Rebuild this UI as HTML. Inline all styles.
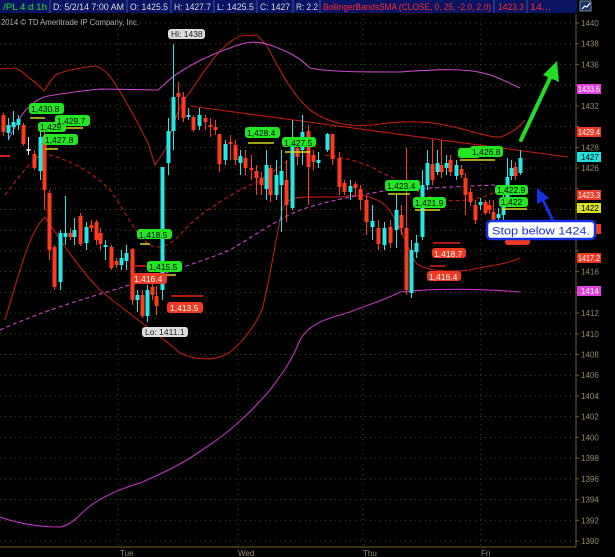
<!DOCTYPE html>
<html><head><meta charset="utf-8"><style>
html,body{margin:0;padding:0;background:#000;width:615px;height:557px;overflow:hidden}
svg{display:block}
text{font-family:"Liberation Sans",sans-serif}
</style></head><body>
<svg id="s" width="615" height="557" viewBox="0 0 615 557" xmlns="http://www.w3.org/2000/svg">
<rect width="615" height="557" fill="#000"/>
<g id="grid"></g>
<!-- header -->
<rect x="0" y="0" width="577" height="13" fill="#0a1463"/>
<g font-size="9" fill="#d8d8d8" lengthAdjust="spacingAndGlyphs">
<text x="3" y="10" fill="#26e026" textLength="44" lengthAdjust="spacingAndGlyphs">/PL 4 d 1h</text>
<text x="53" y="10" textLength="71" lengthAdjust="spacingAndGlyphs">D: 5/2/14 7:00 AM</text>
<text x="130" y="10" textLength="38" lengthAdjust="spacingAndGlyphs">O: 1425.5</text>
<text x="174" y="10" textLength="37" lengthAdjust="spacingAndGlyphs">H: 1427.7</text>
<text x="217" y="10" textLength="37" lengthAdjust="spacingAndGlyphs">L: 1425.5</text>
<text x="260" y="10" textLength="30" lengthAdjust="spacingAndGlyphs">C: 1427</text>
<text x="296" y="10" textLength="22" lengthAdjust="spacingAndGlyphs">R: 2.2</text>
<text x="323" y="10" fill="#ff2a2a" textLength="168" lengthAdjust="spacingAndGlyphs">BollingerBandsSMA (CLOSE, 0, 25, -2.0, 2.0)</text>
<text x="498" y="10" fill="#ff2a2a" textLength="26" lengthAdjust="spacingAndGlyphs">1423.3</text>
<text x="530" y="10" fill="#ff2a2a" textLength="21" lengthAdjust="spacingAndGlyphs">14...</text>
</g>
<g stroke="#3b55b0" stroke-width="1">
<line x1="50" y1="0" x2="50" y2="13"/><line x1="127" y1="0" x2="127" y2="13"/><line x1="171" y1="0" x2="171" y2="13"/>
<line x1="214" y1="0" x2="214" y2="13"/><line x1="257" y1="0" x2="257" y2="13"/><line x1="293" y1="0" x2="293" y2="13"/>
<line x1="320" y1="0" x2="320" y2="13"/><line x1="494" y1="0" x2="494" y2="13"/><line x1="527" y1="0" x2="527" y2="13"/>
</g>
<rect x="580" y="1" width="11" height="10" fill="#1a2f6a" stroke="#8aa" stroke-width="0.8"/>
<path d="M582 9 L585 6 L587 7 L590 3" stroke="#fff" fill="none" stroke-width="1.2"/>
<text x="1" y="25" font-size="8.5" fill="#b0b0b0" textLength="138" lengthAdjust="spacingAndGlyphs">2014 © TD Ameritrade IP Company, Inc.</text>

<!-- bands -->
<g fill="none" stroke-width="1.1">
<path stroke="#c01a10" d="M0 69 L15 68 C22 70,26 76,32 80 C38 84,40 87,44 91 C48 85,52 78,56 75 C65 70,80 68,95 66 C100 67,104 70,108 74 C115 82,125 100,135 118 L148 143 L155 165 L165 150 C172 130,178 105,190 92 C205 70,220 45,240 36 L257 35 L267 46 C280 70,290 92,310 110 C330 124,350 128,380 124 C410 120,430 122,445 125 C470 130,490 138,500 137 C512 134,520 126,525 120"/>
<path stroke="#c01a10" d="M5 320 C20 270,30 230,45 217 C60 240,80 270,100 290 C130 315,160 335,180 353 C195 360,215 362,230 352 C245 340,255 325,262 310 C270 280,278 225,283 207 C290 195,300 197,340 197 C360 194,372 195,385 205 C395 215,405 240,415 262 C425 272,450 272,470 270 C490 265,505 265,520 258"/>
<path stroke="#c01a10" stroke-dasharray="4,3" d="M5 195 C20 175,30 162,43 153 C70 160,90 170,110 190 C125 210,135 235,150 245 C160 250,170 245,180 235 C200 210,240 190,260 180 C285 165,300 150,313 140 M325 155 C345 158,365 162,380 172 C400 180,420 195,440 200 C460 202,480 200,495 192"/>
<path stroke="#cc44cc" d="M8 140 C15 128,20 115,28 108 C35 101,40 98,48 96 C60 94,80 91,100 89 L158 90 C165 84,170 78,180 72 C195 62,210 55,230 48 C245 42,255 40,270 45 C290 52,300 58,310 68 C330 72,360 72,400 72 C440 69,470 68,490 75 C505 80,515 86,520 88"/>
<path stroke="#cc44cc" stroke-dasharray="4,3" d="M0 330 C40 312,80 300,120 288 C160 275,200 262,230 250 C260 232,280 218,300 210 C330 200,360 195,390 190 C430 188,470 186,495 185"/>
<path stroke="#c033c0" d="M0 517 C20 524,40 527,60 527 C70 525,75 520,85 510 C100 497,120 489,140 483 C160 474,180 466,205 448 C230 432,250 413,270 390 C285 370,292 360,300 340 C310 322,330 318,350 312 C370 304,385 300,400 292 C430 289,470 288,520 292"/>
<line x1="190" y1="106" x2="568" y2="157" stroke="#c01a10"/>
<line x1="0" y1="156" x2="10" y2="156" stroke="#d0201a" stroke-width="2"/>
</g>
<g id="candles"></g>

<!-- yellow/red level lines -->
<g stroke="#d8d820" stroke-width="1.5">
<line x1="30" y1="118" x2="45" y2="118"/><line x1="65" y1="128" x2="83" y2="128"/><line x1="45" y1="149" x2="58" y2="149"/>
<line x1="140" y1="244" x2="150" y2="244"/><line x1="165" y1="275" x2="176" y2="275"/>
<line x1="248" y1="143" x2="274" y2="143"/><line x1="285" y1="152" x2="310" y2="152"/>
<line x1="388" y1="194" x2="410" y2="194"/><line x1="415" y1="210" x2="440" y2="210"/>
<line x1="460" y1="160" x2="495" y2="160"/><line x1="502" y1="209" x2="527" y2="209"/>
</g>
<g stroke="#e02010" stroke-width="1.5">
<line x1="135" y1="266" x2="150" y2="266"/><line x1="171" y1="296" x2="203" y2="296"/>
<line x1="433" y1="243" x2="460" y2="243"/><line x1="430" y1="266" x2="445" y2="266"/>
</g>

<!-- labels -->
<g font-size="8.5">
<g fill="#22e622"><rect x="29" y="103" width="35" height="11" rx="3"/><rect x="55" y="115" width="35" height="11" rx="3"/><rect x="38" y="122" width="28" height="10" rx="3"/><rect x="43" y="134" width="35" height="11" rx="3"/>
<rect x="137" y="229" width="35" height="10" rx="3"/><rect x="147" y="261" width="35" height="11" rx="3"/>
<rect x="245" y="127" width="35" height="11" rx="3"/><rect x="282" y="137" width="34" height="10" rx="3"/>
<rect x="385" y="180" width="35" height="11" rx="3"/><rect x="413" y="197" width="33" height="11" rx="3"/>
<rect x="458" y="148" width="22" height="10" rx="3"/><rect x="470" y="146" width="33" height="11" rx="3"/>
<rect x="495" y="185" width="33" height="10" rx="3"/><rect x="499" y="197" width="29" height="10" rx="3"/></g>
<g fill="#000">
<text x="31" y="112">1,430.8</text><text x="57" y="124">1,429.7</text><text x="40" y="130">1,429</text><text x="45" y="143">1,427.8</text>
<text x="139" y="238">1,418.5</text><text x="149" y="270">1,415.5</text>
<text x="247" y="136">1,428.4</text><text x="284" y="146">1,427.5</text>
<text x="387" y="189">1,423.4</text><text x="415" y="206">1,421.9</text>
<text x="472" y="155">1,426.8</text><text x="497" y="193">1,422.9</text><text x="501" y="205">1,422</text>
</g>
<g fill="#ee3a22"><rect x="132" y="273" width="35" height="11" rx="3"/><rect x="167" y="302" width="36" height="11" rx="3"/>
<rect x="432" y="248" width="34" height="10" rx="3"/><rect x="427" y="271" width="34" height="10" rx="3"/><rect x="505" y="236" width="25" height="9" rx="3"/></g>
<g fill="#fff"><text x="134" y="282">1,416.4</text><text x="170" y="311">1,413.5</text><text x="434" y="257">1,418.7</text><text x="429" y="280">1,416.4</text></g>
<g fill="#ddd"><rect x="168" y="29" width="37" height="10" rx="3"/><rect x="142" y="327" width="46" height="10" rx="3"/></g>
<g fill="#222"><text x="171" y="37">Hi: 1438</text><text x="145" y="335">Lo: 1411.1</text></g>
</g>

<!-- arrows -->
<line x1="521" y1="140" x2="550" y2="78" stroke="#22dd22" stroke-width="4" stroke-linecap="round"/>
<polygon points="557,61 559,82 543,75" fill="#22dd22"/>
<line x1="553" y1="221" x2="543" y2="200" stroke="#1530e0" stroke-width="3"/>
<polygon points="537,188 549,198 537,204" fill="#1530e0"/>

<!-- axis -->
<line x1="576" y1="14" x2="576" y2="547" stroke="#7a5a20"/>
<line x1="0" y1="547" x2="576" y2="547" stroke="#7a5a20"/>
<g id="axis" font-size="8" fill="#9a8a6a"></g>
<g font-size="8" fill="#9a8a6a"><text x="120" y="556">Tue</text><text x="238" y="556">Wed</text><text x="363" y="556">Thu</text><text x="481" y="556">Fri</text></g>
<g font-size="8">
<rect x="577" y="84" width="24" height="10" fill="#e040e0"/><text x="578" y="92" fill="#fff" textLength="22" lengthAdjust="spacingAndGlyphs">1433.6</text>
<rect x="577" y="127" width="24" height="10" fill="#ee3a22"/><text x="578" y="135" fill="#fff" textLength="22" lengthAdjust="spacingAndGlyphs">1429.4</text>
<rect x="577" y="152" width="24" height="10" fill="#22e0e0"/><text x="581" y="160" fill="#000">1427</text>
<rect x="577" y="190" width="24" height="10" fill="#ee3a22"/><text x="578" y="198" fill="#fff" textLength="22" lengthAdjust="spacingAndGlyphs">1423.3</text>
<rect x="577" y="203" width="24" height="10" fill="#d8e020"/><text x="581" y="211" fill="#000">1422</text>
<rect x="577" y="224" width="24" height="10" fill="#ee3a22"/>
<rect x="577" y="253" width="24" height="10" fill="#ee3a22"/><text x="578" y="261" fill="#fff" textLength="22" lengthAdjust="spacingAndGlyphs">1417.2</text>
<rect x="577" y="286" width="24" height="10" fill="#e040e0"/><text x="581" y="294" fill="#fff">1414</text>
</g>
<rect x="487" y="221" width="108" height="18" rx="4" fill="#fff" stroke="#1530e0" stroke-width="2.5"/>
<text x="492" y="234.5" font-size="11" fill="#1530e0" textLength="98" lengthAdjust="spacingAndGlyphs">Stop below 1424.</text>
</svg>
<script>
var NS="http://www.w3.org/2000/svg";
function el(p,t,a){var e=document.createElementNS(NS,t);for(var k in a)e.setAttribute(k,a[k]);p.appendChild(e);return e;}
var g=document.getElementById("grid"),ax=document.getElementById("axis");
var tags=[92,135,160,198,211,229,261,294];
for(var p=1440;p>=1390;p-=2){var y=23+(1440-p)*10.36;
el(g,"line",{x1:0,y1:y,x2:576,y2:y,stroke:"#5a4512","stroke-dasharray":"1,4"});
if(y<546){el(ax,"line",{x1:576,y1:y,x2:579,y2:y,stroke:"#7a5a20"});
var hid=tags.some(function(t){return Math.abs(t-4-y)<7;});
if(!hid){var t=el(ax,"text",{x:581,y:y+3});t.textContent=p;}}}
[118,238,363,481].forEach(function(x){el(g,"line",{x1:x,y1:14,x2:x,y2:547,stroke:"#5a4512","stroke-dasharray":"1,4"});});
var C="#ff3a1a",Q="#22e8e8",W="#ddd";
var d=[[3,115,132,113,136,C],[8,125,133,118,140,Q],[13,122,127,111,135,Q],[18,119,125,115,130,Q],[23,125,144,123,146,C],[28,149,151,137,155,W],[34,154,168,150,170,C],[40,137,171,130,180,Q],[44,136,190,130,210,C],[49,193,250,190,260,C],[54,247,287,245,290,C],[60,233,282,230,290,Q],[65,233,237,196,245,Q],[70,233,237,228,240,C],[74,230,237,218,245,Q],[80,216,244,213,246,C],[86,227,243,222,250,Q],[91,225,228,220,232,C],[96,222,240,220,245,C],[100,233,244,228,250,C],[105,245,247,240,260,Q],[111,247,268,245,270,C],[116,261,265,258,268,C],[121,258,265,250,270,Q],[126,253,261,245,270,Q],[132,249,300,248,305,C],[137,295,300,290,312,Q],[142,295,316,290,318,C],[147,290,316,285,322,Q],[152,287,295,280,300,C],[156,296,306,286,315,C],[162,167,290,167,300,Q],[168,131,163,118,175,Q],[173,97,131,44,150,Q],[178,93,97,82,120,C],[183,97,118,92,122,C],[188,115,117,108,120,Q],[193,117,130,115,132,C],[199,115,126,108,130,Q],[205,118,122,115,130,C],[210,125,127,118,137,C],[215,127,130,120,135,C],[219,134,164,134,172,C],[225,144,160,140,165,Q],[230,142,144,135,160,C],[235,145,160,140,165,C],[240,156,163,150,175,Q],[245,158,168,150,175,C],[251,168,170,155,180,C],[256,171,178,165,195,C],[261,178,185,172,195,C],[266,165,189,150,200,Q],[270,168,195,165,202,C],[276,175,195,160,200,Q],[281,171,185,150,232,Q],[286,180,205,160,222,C],[292,146,208,120,210,Q],[297,148,157,140,165,C],[302,132,150,115,165,Q],[308,131,167,125,205,C],[313,155,162,150,170,C],[318,160,163,152,168,Q],[327,134,150,133,152,Q],[332,134,159,134,165,C],[339,158,187,152,195,C],[344,183,192,180,195,C],[350,186,192,180,200,Q],[355,184,188,182,195,C],[360,189,200,185,210,C],[366,200,222,195,235,C],[372,221,227,205,240,Q],[378,228,244,220,250,C],[384,228,245,222,250,Q],[390,227,243,220,248,C],[396,210,230,195,248,Q],[401,215,228,205,235,C],[406,228,290,148,295,C],[411,250,293,240,298,Q],[416,243,252,235,258,Q],[422,185,237,170,240,Q],[427,163,185,150,190,Q],[432,164,180,140,185,C],[437,163,172,150,175,Q],[441,165,172,140,178,C],[446,163,168,155,175,Q],[450,160,172,155,176,C],[456,165,176,160,180,Q],[461,169,175,165,178,C],[465,178,195,173,215,C],[470,192,202,188,206,C],[475,205,220,200,224,C],[480,202,205,198,210,Q],[485,202,213,200,215,C],[489,205,210,200,214,C],[493,212,220,200,222,C],[498,214,218,208,222,Q],[503,200,215,195,222,Q],[507,177,200,158,205,Q],[511,168,176,160,180,Q],[515,167,176,162,180,C],[520,158,173,150,175,Q]];
var cg=document.getElementById("candles");
d.forEach(function(c){el(cg,"line",{x1:c[0]+0.5,y1:c[3],x2:c[0]+0.5,y2:c[4],stroke:c[5],"stroke-width":1});
el(cg,"rect",{x:c[0]-1.5,y:c[1],width:4,height:Math.max(1.5,c[2]-c[1]),fill:c[5]});});
</script>
</body></html>
